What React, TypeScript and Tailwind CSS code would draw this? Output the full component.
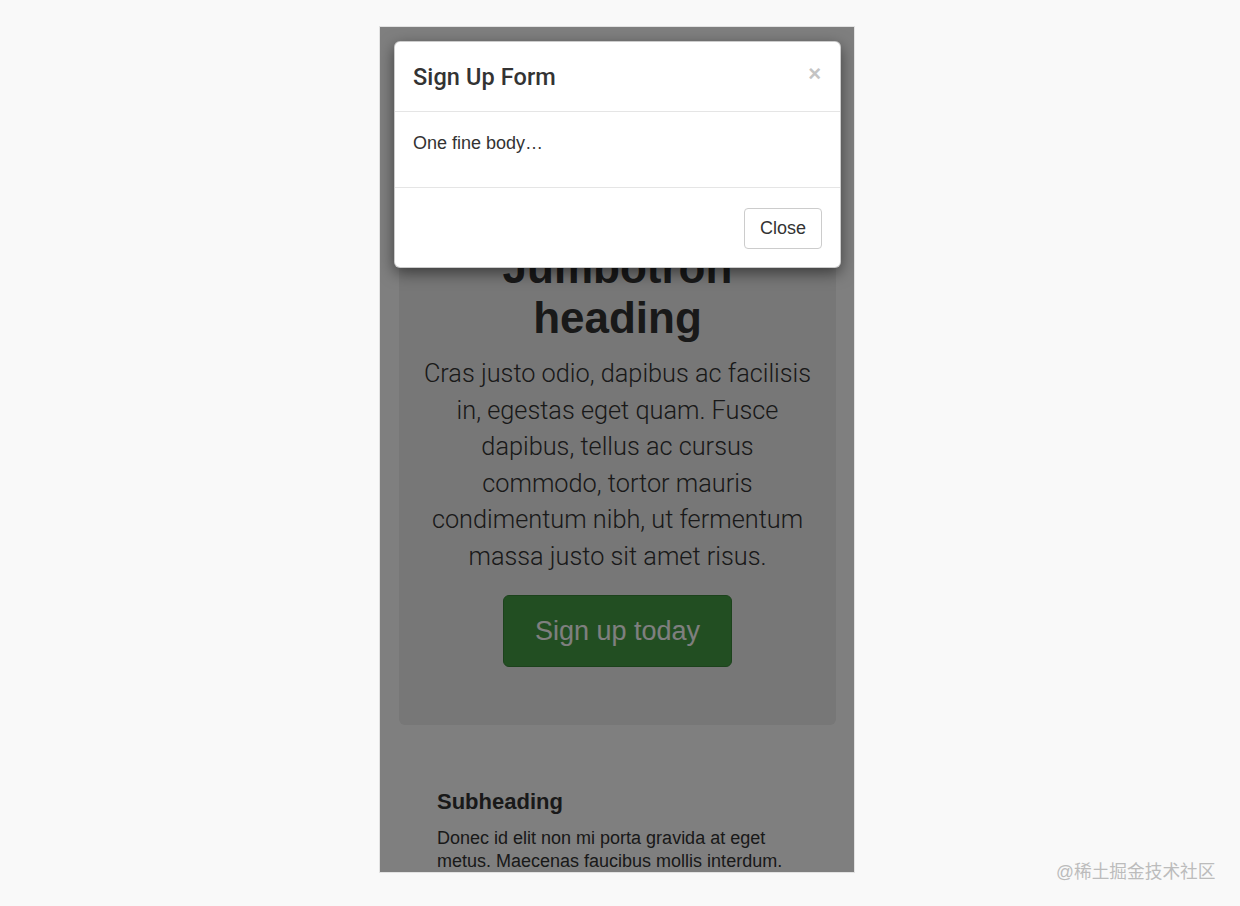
import React from "react";

const font = { fontFamily: '"Liberation Sans", Arial, sans-serif' };

const SignUpModal = ({ onClose }: { onClose: () => void }) => {
  return (
    <div className="absolute top-[14px] left-[14px] w-[447px] bg-white rounded-[6px] border border-black/20 shadow-[0_5px_15px_rgba(0,0,0,0.5)]">
      <div className="h-[70px] px-[18px] flex items-center justify-between border-b border-[#e5e5e5]">
        <h4
          className="text-[23.5px] leading-none text-[#333] font-medium pt-[2px] tracking-[0.1px]"
          style={{ fontFamily: 'Roboto, "Liberation Sans", sans-serif' }}
        >
          Sign Up Form
        </h4>
        <button
          onClick={onClose}
          className="text-[22px] font-bold leading-none text-[#c4c4c4] -mt-[5px] mr-[1px]"
        >
          ×
        </button>
      </div>
      <div className="px-[18px] pt-[19px] pb-[32px] border-b border-[#e5e5e5]">
        <p className="text-[18px] leading-[24px] text-[#333]">One fine body…</p>
      </div>
      <div className="flex justify-end pt-[20px] pb-[18px] px-[18px]">
        <button
          onClick={onClose}
          className="h-[41px] px-[15px] text-[18px] text-[#333] bg-white border border-[#ccc] rounded-[4px]"
        >
          Close
        </button>
      </div>
    </div>
  );
};

export default function App() {
  return (
    <div
      className="min-h-[906px] w-[1240px] bg-[#f9f9f9] relative pt-[26px]"
      style={font}
    >
      <div className="ml-[379px] w-[476px] h-[847px] border border-[#e2e2e2] bg-white relative overflow-hidden">
        <div className="pt-[150px]">
          <div className="mx-[19px] w-[437px] bg-[#eeeeee] rounded-[6px] pt-[66px] pb-[58px] text-center">
            <h1 className="text-[44px] leading-[50px] font-bold text-[#333] mb-[13px]">
              Jumbotron
              <br />
              heading
            </h1>
            <p
              className="text-[25.3px] leading-[36.6px] font-light text-[#333] mb-[19px]"
              style={{ fontFamily: 'Roboto, "Liberation Sans", sans-serif' }}
            >
              Cras justo odio, dapibus ac facilisis
              <br />
              in, egestas eget quam. Fusce
              <br />
              dapibus, tellus ac cursus
              <br />
              commodo, tortor mauris
              <br />
              condimentum nibh, ut fermentum
              <br />
              massa justo sit amet risus.
            </p>
            <button className="px-[31px] py-[17px] text-[27px] leading-[36px] text-white bg-[#449d44] border border-[#398439] rounded-[6px]">
              Sign up today
            </button>
          </div>
          <div className="pl-[57px] pr-[40px] pt-[64px]">
            <h2 className="text-[22px] leading-[26px] font-bold text-[#333] mb-[12px]">
              Subheading
            </h2>
            <p className="text-[18px] leading-[23.5px] text-[#333]">
              Donec id elit non mi porta gravida at eget
              <br />
              metus. Maecenas faucibus mollis interdum.
            </p>
          </div>
        </div>
        <div className="absolute inset-0 bg-black/50" />
        <SignUpModal onClose={() => {}} />
      </div>
      <div
        className="absolute left-[1056px] top-[861px] text-[17.7px] leading-[23px] text-[#bcbcbc]"
        style={{ fontFamily: '"Liberation Sans", "Noto Sans CJK SC", sans-serif' }}
      >
        @稀土掘金技术社区
      </div>
    </div>
  );
}
